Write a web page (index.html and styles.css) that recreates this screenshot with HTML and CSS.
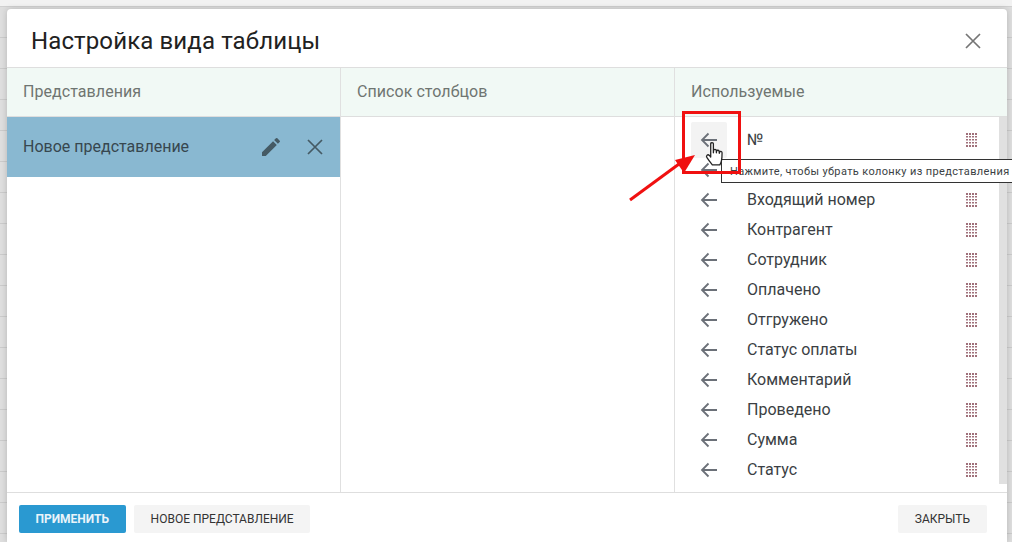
FILE: index.html
```html
<!DOCTYPE html>
<html lang="ru">
<head>
<meta charset="utf-8">
<title>Настройка вида таблицы</title>
<link rel="stylesheet" href="styles.css">
</head>
<body>
<svg class="defs" width="0" height="0" aria-hidden="true">
  <symbol id="arrow" viewBox="0 0 24 24"><path d="M20 12H5M11.5 5.5 5 12l6.500 6.500" fill="none" stroke="currentColor" stroke-width="1.800"/></symbol>
  <symbol id="close" viewBox="0 0 24 24"><path d="M5 5l14 14M19 5 5 19" fill="none" stroke="currentColor" stroke-width="1.700"/></symbol>
  <symbol id="grip" viewBox="0 0 11 15">
    <g fill="#a0707a">
      <rect x="0" y="0" width="2" height="2"/><rect x="3" y="0" width="2" height="2"/><rect x="6" y="0" width="2" height="2"/><rect x="9" y="0" width="2" height="2"/>
      <rect x="0" y="3" width="2" height="1.500"/><rect x="3" y="3" width="2" height="1.500"/><rect x="6" y="3" width="2" height="1.500"/><rect x="9" y="3" width="2" height="1.500"/>
      <rect x="0" y="6" width="2" height="1.500"/><rect x="3" y="6" width="2" height="1.500"/><rect x="6" y="6" width="2" height="1.500"/><rect x="9" y="6" width="2" height="1.500"/>
      <rect x="0" y="9" width="2" height="1.500"/><rect x="3" y="9" width="2" height="1.500"/><rect x="6" y="9" width="2" height="1.500"/><rect x="9" y="9" width="2" height="1.500"/>
      <rect x="0" y="12" width="2" height="2"/><rect x="3" y="12" width="2" height="2"/><rect x="6" y="12" width="2" height="2"/><rect x="9" y="12" width="2" height="2"/>
    </g>
  </symbol>
</svg>
<div class="backdrop">
  <div class="modal">
    <header class="modal-head">
      <h1 class="modal-title">Настройка вида таблицы</h1>
      <svg class="modal-close"><use href="#close"/></svg>
    </header>
    <div class="columns">
      <section class="col col-views">
        <div class="col-head">Представления</div>
        <div class="view-row">
          <span class="view-name">Новое представление</span>
          <svg class="view-edit" viewBox="0 0 24 24"><path d="M3 17.250V21h3.750L17.810 9.940l-3.750-3.750L3 17.250zM20.710 7.040a1 1 0 0 0 0-1.410l-2.340-2.340a1 1 0 0 0-1.410 0l-1.830 1.830 3.750 3.750 1.830-1.830z" fill="currentColor"/></svg>
          <svg class="view-del"><use href="#close"/></svg>
        </div>
      </section>
      <section class="col col-list">
        <div class="col-head">Список столбцов</div>
      </section>
      <section class="col col-used">
        <div class="col-head">Используемые</div>
        <div class="used-body">
          <ul class="used-list">
            <li class="used-row"><span class="arrow-btn is-hover"><svg class="arrow-icon"><use href="#arrow"/></svg></span><span class="used-name">№</span><svg class="grip"><use href="#grip"/></svg></li>
            <li class="used-row"><span class="arrow-btn"><svg class="arrow-icon"><use href="#arrow"/></svg></span><svg class="grip grip-only"><use href="#grip"/></svg></li>
            <li class="used-row"><span class="arrow-btn"><svg class="arrow-icon"><use href="#arrow"/></svg></span><span class="used-name">Входящий номер</span><svg class="grip"><use href="#grip"/></svg></li>
            <li class="used-row"><span class="arrow-btn"><svg class="arrow-icon"><use href="#arrow"/></svg></span><span class="used-name">Контрагент</span><svg class="grip"><use href="#grip"/></svg></li>
            <li class="used-row"><span class="arrow-btn"><svg class="arrow-icon"><use href="#arrow"/></svg></span><span class="used-name">Сотрудник</span><svg class="grip"><use href="#grip"/></svg></li>
            <li class="used-row"><span class="arrow-btn"><svg class="arrow-icon"><use href="#arrow"/></svg></span><span class="used-name">Оплачено</span><svg class="grip"><use href="#grip"/></svg></li>
            <li class="used-row"><span class="arrow-btn"><svg class="arrow-icon"><use href="#arrow"/></svg></span><span class="used-name">Отгружено</span><svg class="grip"><use href="#grip"/></svg></li>
            <li class="used-row"><span class="arrow-btn"><svg class="arrow-icon"><use href="#arrow"/></svg></span><span class="used-name">Статус оплаты</span><svg class="grip"><use href="#grip"/></svg></li>
            <li class="used-row"><span class="arrow-btn"><svg class="arrow-icon"><use href="#arrow"/></svg></span><span class="used-name">Комментарий</span><svg class="grip"><use href="#grip"/></svg></li>
            <li class="used-row"><span class="arrow-btn"><svg class="arrow-icon"><use href="#arrow"/></svg></span><span class="used-name">Проведено</span><svg class="grip"><use href="#grip"/></svg></li>
            <li class="used-row"><span class="arrow-btn"><svg class="arrow-icon"><use href="#arrow"/></svg></span><span class="used-name">Сумма</span><svg class="grip"><use href="#grip"/></svg></li>
            <li class="used-row"><span class="arrow-btn"><svg class="arrow-icon"><use href="#arrow"/></svg></span><span class="used-name">Статус</span><svg class="grip"><use href="#grip"/></svg></li>
          </ul>
          <div class="scrollbar"></div>
        </div>
      </section>
    </div>
    <footer class="modal-foot">
      <button class="btn btn-primary">Применить</button>
      <button class="btn btn-new">Новое представление</button>
      <button class="btn btn-close">Закрыть</button>
    </footer>
  </div>
</div>
<div class="tooltip">Нажмите, чтобы убрать колонку из представления</div>
<div class="red-box"></div>
<svg class="red-arrow" viewBox="0 0 80 60"><path d="M1 57 50 21" stroke="#f01010" stroke-width="3" fill="none"/><path d="M66 12 46 17 55 30z" fill="#f01010"/></svg>
<svg class="hand" viewBox="0 0 20 28"><path d="M6 2.500c0-1.400 2.500-1.400 2.500 0V11l.2-2.200c.1-1.300 2.500-1.200 2.500.2l.1 2 .2-1.500c.2-1.300 2.400-1.100 2.400.3l.1 1.700.3-1c.3-1.200 2.300-.9 2.300.5 0 3-.1 5.500-.6 7.500-.4 1.700-1 2.800-1.500 3.800H7.500C6.500 21 4.500 18.500 2.500 15.500 1.200 13.500 3.300 12 4.800 13.500L6 15z" fill="#fff" stroke="#222" stroke-width="1.200" stroke-linejoin="round"/></svg>
</body>
</html>
```
FILE: styles.css
```css
* { box-sizing: border-box; }
html, body { margin: 0; height: 542px; overflow: hidden; }
body { position: relative; width: 1012px; font-family: Roboto, "Liberation Sans", sans-serif; color: #212121; }
.defs { display: block; height: 0; }
.backdrop {
  height: 542px;
  padding: 9px 5px 0 7px;
  background-color: #dedede;
  background-image:
    linear-gradient(to bottom, #f2f2f2 0, #f2f2f2 6px, #d0d0d0 6px, #d0d0d0 7px, rgba(0,0,0,0) 7px),
    repeating-linear-gradient(to bottom, #dedede 0, #dedede 30px, #cbcbcb 30px, #cbcbcb 31px);
  background-position: 0 0, 0 7px;
  background-repeat: no-repeat, repeat;
}
.modal {
  height: 100%;
  width: 1000px;
  display: flex;
  flex-direction: column;
  background: #fff;
  border-radius: 4px 4px 0 0;
  box-shadow: 0 0 6px rgba(0,0,0,.18);
}
.modal-head {
  height: 58px;
  flex: none;
  display: flex;
  align-items: center;
  justify-content: space-between;
  padding: 6px 22px 0 24px;
}
.modal-title { margin: 0; font-size: 24px; font-weight: 400; letter-spacing: .12px; color: #212121; }
.modal-close { width: 24px; height: 24px; color: #757575; }
.columns {
  flex: none;
  height: 426px;
  display: flex;
  border-top: 1px solid #dedede;
  border-bottom: 1px solid #dedede;
}
.col { display: flex; flex-direction: column; border-right: 1px solid #e0e0e0; min-width: 0; }
.col-views { width: 334px; }
.col-list { width: 334px; }
.col-used { flex: 1; border-right: 0; }
.col-head {
  height: 49px;
  flex: none;
  display: flex;
  align-items: center;
  padding: 0 0 2px 16px;
  background: #f1f9f5;
  border-bottom: 1px solid #dedede;
  font-size: 16px;
  letter-spacing: .06px;
  color: #6f7571;
}
.view-row {
  height: 60px;
  display: flex;
  align-items: center;
  padding: 0 13px 0 16px;
  background: #89b8d1;
  color: #37474f;
  font-size: 16px;
}
.view-name { flex: 1; padding-bottom: 2px; }
.view-edit { width: 24px; height: 24px; color: #455a64; margin-right: 20px; }
.view-del { width: 24px; height: 24px; color: #455a64; }
.used-body { flex: 1; display: flex; min-height: 0; }
.used-list { list-style: none; margin: 0; padding: 8px 0 0; flex: 1; min-width: 0; }
.used-row { height: 30px; display: flex; align-items: center; padding-left: 16px; font-size: 16px; color: #3b3f44; }
.arrow-btn { width: 36px; height: 30px; display: flex; align-items: center; justify-content: center; border-radius: 2px; }
.arrow-btn.is-hover { height: 36px; background: #f3f3f3; }
.arrow-icon { width: 24px; height: 24px; color: #6b7078; }
.used-name { flex: 1; margin-left: 20px; padding-bottom: 2px; }
.grip { width: 11px; height: 15px; margin-right: 22px; }
.grip-only { margin-left: auto; }
.scrollbar { width: 8px; height: 367px; background: #e0e0e0; flex: none; }
.modal-foot { flex: 1; display: flex; align-items: flex-start; gap: 8px; padding: 12px 20px 0 12px; }
.btn {
  height: 28px;
  border: 0;
  border-radius: 2px;
  padding: 0 16.5px;
  background: #f4f4f4;
  color: #333;
  font-family: Roboto, "Liberation Sans", sans-serif;
  font-size: 12px;
  text-transform: uppercase;
}
.btn-primary { background: #2a99d1; color: #eaf4fa; font-weight: 700; }
.btn-new { padding: 0 16px 0 17px; }
.btn-close { margin-left: auto; padding: 0 17px; }
.tooltip {
  position: absolute;
  left: 721px;
  top: 159px;
  width: 295px;
  height: 24px;
  padding-left: 8px;
  background: #fff;
  border: 1px solid #333;
  font-size: 11px;
  line-height: 23px;
  letter-spacing: .36px;
  white-space: nowrap;
  color: #3b3f44;
}
.red-box { position: absolute; left: 682px; top: 111px; width: 59px; height: 63px; border: 3px solid #f01010; }
.red-arrow { position: absolute; left: 629px; top: 143px; width: 80px; height: 60px; }
.hand { position: absolute; left: 704px; top: 141px; width: 22px; height: 30px; }
```
